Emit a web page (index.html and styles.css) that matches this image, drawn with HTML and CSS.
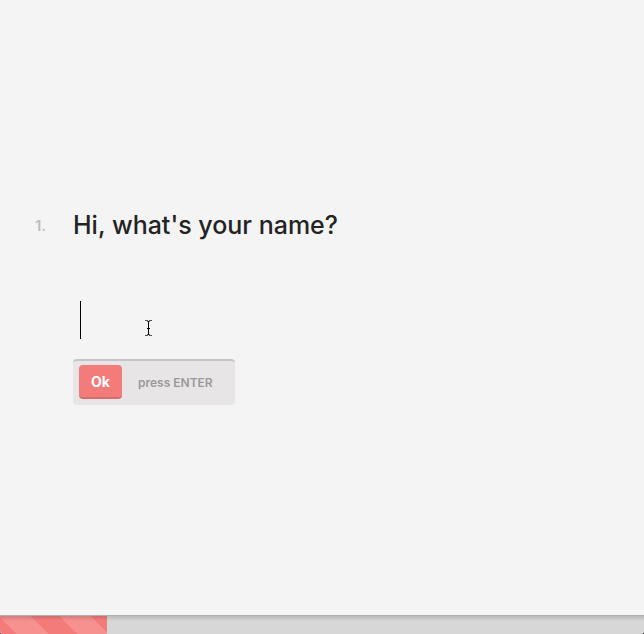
FILE: index.html
```html
<!DOCTYPE html>
<html lang="en">
<head>
<meta charset="utf-8">
<meta name="viewport" content="width=device-width, initial-scale=1">
<title>Hi, what's your name?</title>
<link rel="stylesheet" href="styles.css">
</head>
<body>
<div class="page">
  <main class="stage">
    <form class="question">
      <span class="number">1.</span>
      <label class="title" for="name">Hi, what's your name?</label>
      <div class="field">
        <input class="answer" id="name" type="text" autocomplete="off">
        <span class="caret"></span>
        <svg class="pointer" width="9" height="17" viewBox="0 0 9 17" fill="none" aria-hidden="true">
          <path d="M1 .5H4M5 .5H8M1 15.5H4M5 15.5H8" stroke="#555"/>
          <path d="M3 1.5H6M3 14.5H6" stroke="#666"/>
          <path d="M4.5 1V15M3 8.5H6" stroke="#000"/>
        </svg>
      </div>
      <div class="actions">
        <button class="ok" type="button">Ok</button>
        <span class="hint">press ENTER</span>
      </div>
    </form>
  </main>
  <div class="progress" role="progressbar" aria-label="Progress" aria-valuemin="0" aria-valuemax="6" aria-valuenow="1">
    <div class="bar" style="width: 16.6%"></div>
  </div>
</div>
</body>
</html>
```

FILE: styles.css
```css
* {
  box-sizing: border-box;
}

html {
  background: #222;
}

body {
  margin: 0;
  font-family: Inter, "Open Sans", sans-serif;
  color: #232323;
}

.page {
  display: flex;
  flex-direction: column;
  min-height: 100vh;
  background: #f4f4f4;
  border-radius: 0 0 3px 3px;
  overflow: hidden;
}

.stage {
  flex: 1;
  display: flex;
  align-items: center;
  padding: 0 35px;
}

.question {
  flex: 1;
  display: grid;
  grid-template-columns: 38px 1fr;
  align-items: center;
}

.number {
  font-size: 15px;
  font-weight: 600;
  color: #bdbdbd;
}

.title {
  font-size: 25px;
  line-height: 30px;
  font-weight: 500;
}

.field {
  grid-column: 2;
  position: relative;
  margin-top: 60px;
}

.answer {
  display: block;
  width: 100%;
  height: 40px;
  padding: 0 8px;
  border: 0;
  outline: 0;
  background: transparent;
  font: inherit;
  font-size: 30px;
}

.caret {
  position: absolute;
  left: 7px;
  top: 1px;
  width: 1px;
  height: 38px;
  background: #000;
}

.pointer {
  position: absolute;
  left: 71px;
  top: 20px;
}

.actions {
  grid-column: 2;
  justify-self: start;
  display: flex;
  align-items: center;
  gap: 16px;
  margin-top: 19px;
  padding: 4px 22px 6px 6px;
  border-top: 2px solid #c6c4c4;
  border-radius: 4px;
  background: #e8e5e6;
}

.ok {
  width: 43px;
  height: 34px;
  padding: 0;
  border: 0;
  border-bottom: 2px solid #d86c6c;
  border-radius: 4px;
  background: #f37c7b;
  color: #fff;
  font: inherit;
  font-size: 14px;
  font-weight: 700;
}

.hint {
  font-size: 12px;
  font-weight: 600;
  color: #999;
}

.progress {
  height: 19px;
  border-top: 1px solid #b0b0b0;
  background: linear-gradient(#b9b9b9, #d7d7d7 5px);
}

.bar {
  height: 18px;
  background:
    linear-gradient(rgb(0 0 0 / 14%), transparent 5px),
    repeating-linear-gradient(45deg, #f37c7b 0 12px, #f6918f 12px 34px, #f37c7b 34px 43px);
}
```
